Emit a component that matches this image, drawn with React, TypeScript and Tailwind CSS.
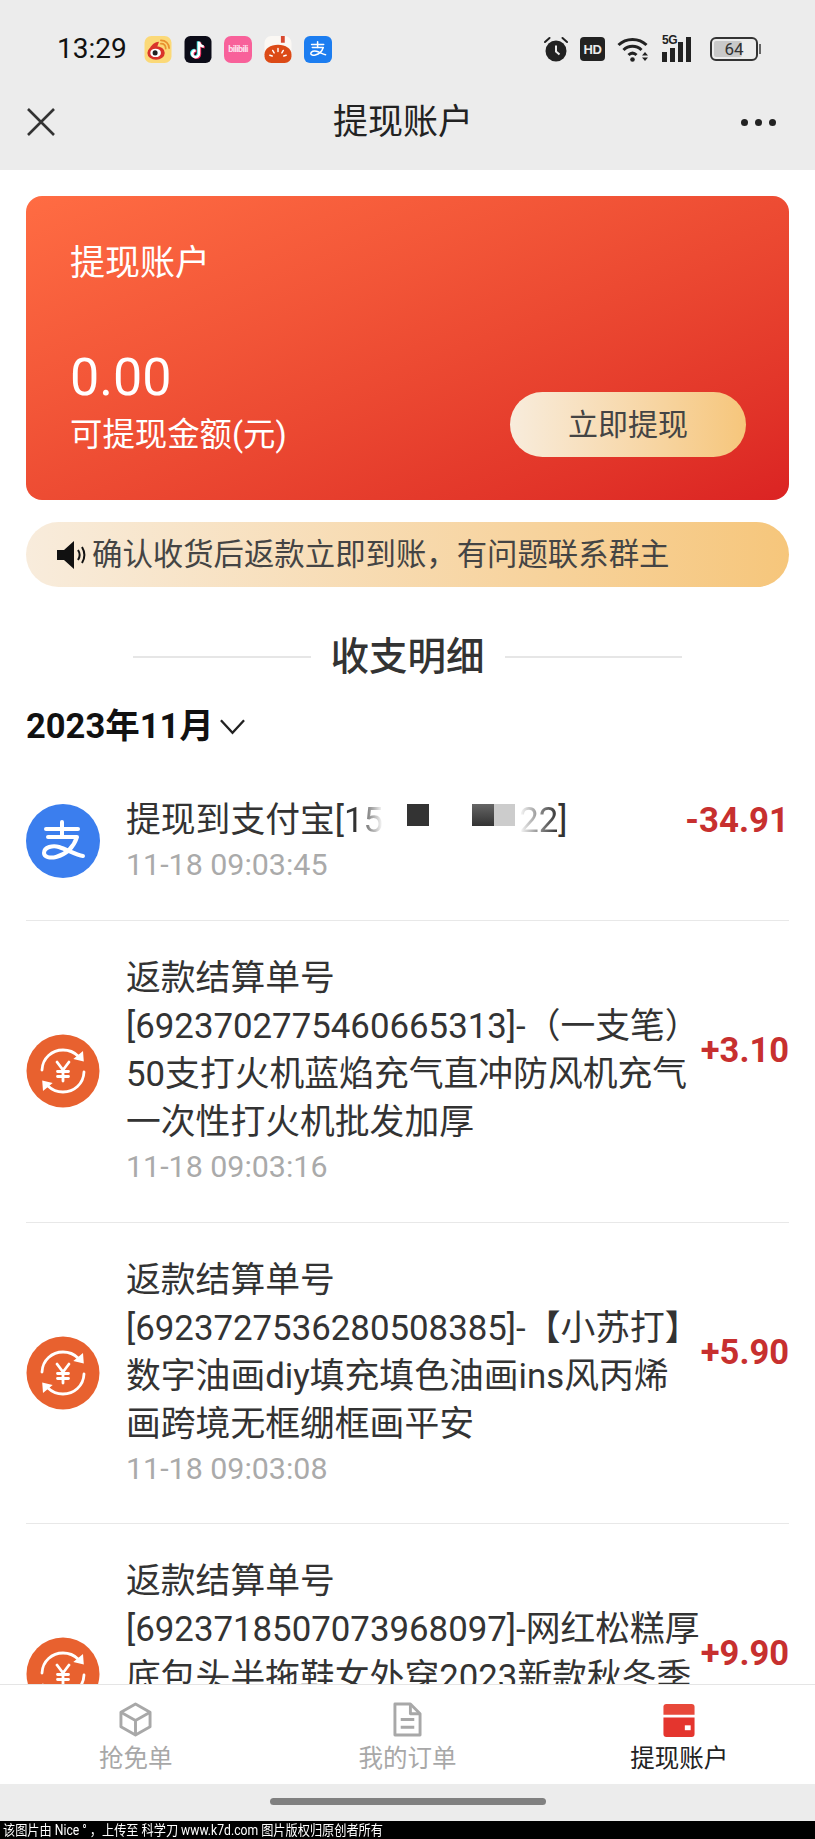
const rows = [
  {
    lines: ['返款结算单号', '[6923702775460665313]-（一支笔）', '50支打火机蓝焰充气直冲防风机充气', '一次性打火机批发加厚'],
    time: '11-18 09:03:16',
    amount: '+3.10',
  },
  {
    lines: ['返款结算单号', '[6923727536280508385]-【小苏打】', '数字油画diy填充填色油画ins风丙烯', '画跨境无框绷框画平安'],
    time: '11-18 09:03:08',
    amount: '+5.90',
  },
  {
    lines: ['返款结算单号', '[6923718507073968097]-网红松糕厚', '底包头半拖鞋女外穿2023新款秋冬季', '\u00a0'],
    time: '\u00a0',
    amount: '+9.90',
  },
];

function AlipayMark({ className }: { className?: string }) {
  return (
    <svg viewBox="0 0 74 74" className={className} fill="none" stroke="currentColor" strokeWidth="4" strokeLinecap="round" strokeLinejoin="round">
      <path d="M20 25h32" />
      <path d="M36 18v15" />
      <path d="M22 33h29c-3 9-10 17-21 20-6 1.500-12 0-12-4 0-6 9-8 15-6 8 2.500 17 8 24 9" />
    </svg>
  );
}

function WeiboIcon() {
  return (
    <svg viewBox="0 0 28 28" className="h-[27px] w-[28px]">
      <rect width="28" height="28" rx="7" fill="#fbd978" />
      <ellipse cx="12" cy="17.500" rx="9" ry="7" fill="#d9332a" />
      <path d="M5 14c2-5 6-8 10-8l-2 6z" fill="#d9332a" />
      <ellipse cx="11.500" cy="17.500" rx="5.500" ry="4.400" fill="#fff" />
      <circle cx="11" cy="17.500" r="2.600" fill="#222" />
      <path d="M17 8c3 0 5 2 5 5M17 4.500c5 0 8.500 3.500 8.500 8" fill="none" stroke="#e8912f" strokeWidth="1.800" strokeLinecap="round" />
    </svg>
  );
}

function TiktokIcon() {
  const note = 'M15 6v12.500a3.500 3.500 0 1 1-3.500-3.500M15 6c.5 3 2.500 4.800 5 5';
  return (
    <svg viewBox="0 0 28 28" className="h-[27px] w-[28px]" fill="none" strokeWidth="2.600">
      <rect width="28" height="28" rx="6" fill="#0c0c18" />
      <path d={note} stroke="#3de0e0" transform="translate(-1 -.6)" />
      <path d={note} stroke="#f0285a" transform="translate(1 .6)" />
      <path d={note} stroke="#fff" />
    </svg>
  );
}

function BiliIcon() {
  return (
    <div className="flex h-[27px] w-[28px] items-center justify-center rounded-[7px] bg-[#f8619a] text-[9px] leading-none font-bold tracking-[-0.6px] text-[#fde2ec]">
      bilibili
    </div>
  );
}

function TomatoIcon() {
  return (
    <svg viewBox="0 0 28 28" className="h-[27px] w-[28px]">
      <rect width="28" height="28" rx="7" fill="#fbf8f4" />
      <rect x="17" y="0" width="4" height="7" fill="#d8482f" />
      <path d="M0 19C0 13 6 9 14 9s14 4 14 10v2a7 7 0 0 1-7 7H7a7 7 0 0 1-7-7z" fill="#dc4a16" />
      <path d="M14 13v3M8.500 15l1.500 2.500M19.500 15l-1.500 2.500M5.500 20l2.500.8M22.500 20l-2.500.8" stroke="#fff" strokeWidth="1.500" strokeLinecap="round" />
    </svg>
  );
}

function RefundIcon() {
  return (
    <svg viewBox="0 0 74 74" className="h-[74px] w-[74px] shrink-0">
      <circle cx="37" cy="37" r="36.500" fill="#e8612f" />
      <g fill="none" stroke="#fff" strokeWidth="2.800" strokeLinecap="round" strokeLinejoin="round">
        <path d="M16 36C16.500 24 26 16 37 16c6 0 11 2 15 6" />
        <path d="M58 38C57.500 50 48 58 37 58c-6 0-11-2-15-6" />
        <path d="M31 28l6 8 6-8M37 36v11M31.500 37.500h11M31.500 42.500h11" />
      </g>
      <path d="M57 17l.8 10.500-10.500-2.500zM17 57l-.8-10.500 10.500 2.500z" fill="#fff" />
    </svg>
  );
}

function AlarmIcon() {
  return (
    <svg viewBox="0 0 24 26" className="h-[26px] w-[24px]" fill="#222">
      <circle cx="12" cy="15" r="10.500" />
      <path d="M12 9.500V15.500l3.500 3" fill="none" stroke="#ececec" strokeWidth="2" />
      <path d="M1 6l4.500-4M23 6l-4.500-4" stroke="#222" strokeWidth="2" strokeLinecap="round" />
    </svg>
  );
}

function WifiIcon() {
  return (
    <svg viewBox="0 0 33 26" className="h-[26px] w-[33px]" fill="none" stroke="#222" strokeWidth="3">
      <path d="M1.500 9C9 1.500 22 1.500 29.500 9" />
      <path d="M6.500 14c5-5 13-5 18 0" />
      <path d="M11.500 19c2.500-2.500 5.500-2.500 8 0" />
      <circle cx="15.500" cy="23.500" r="2.300" fill="#222" stroke="none" />
      <path d="M25 19.500l3-3.500 3 3.500zM25 21.500l3 3.500 3-3.500z" fill="#222" stroke="none" />
    </svg>
  );
}

function TabCube() {
  return (
    <svg viewBox="0 0 34 36" className="h-[35px] w-[33px]" fill="none" stroke="#a8a8a8" strokeWidth="3" strokeLinejoin="round">
      <path d="M17 2l15 8.500v15L17 34 2 25.500v-15z" />
      <path d="M2 10.500l15 8.500 15-8.500M17 19v15" />
    </svg>
  );
}

function TabDoc() {
  return (
    <svg viewBox="0 0 30 36" className="h-[35px] w-[29px]" fill="none" stroke="#a8a8a8" strokeWidth="3" strokeLinejoin="round">
      <path d="M2 2h16l10 10v22H2z" />
      <path d="M18 2v10h10" />
      <path d="M8 18h14M8 26h14" />
    </svg>
  );
}

function TabWallet() {
  return (
    <svg viewBox="0 0 32 36" className="h-[35px] w-[32px]">
      <path d="M3 2h26a3 3 0 0 1 3 3v8H0V5a3 3 0 0 1 3-3z" fill="#e8483a" />
      <path d="M0 16h32v17a3 3 0 0 1-3 3H3a3 3 0 0 1-3-3z" fill="#e4352e" />
      <rect x="22" y="24" width="6" height="5" fill="#fff" />
    </svg>
  );
}

function Tab({ icon, label, active }: { icon: React.ReactNode; label: string; active?: boolean }) {
  return (
    <div className="flex flex-1 flex-col items-center">
      <div className="flex h-[36px] items-center">{icon}</div>
      <span className={`mt-[4px] text-[24.500px] leading-[36px] ${active ? 'text-[#222]' : 'text-[#a8a8a8]'}`}>{label}</span>
    </div>
  );
}

export default function App() {
  return (
    <div className="flex h-[1839px] w-[815px] flex-col overflow-hidden bg-white font-['Roboto','Noto_Sans_CJK_SC',sans-serif] text-[#333]">
      <div className="flex h-[74px] shrink-0 items-center bg-[#ececec] pt-[24px] pr-[54px] pl-[57px]">
        <span className="w-[87px] text-[28px] leading-none text-[#111]">13:29</span>
        <div className="flex items-center gap-[12px]">
          <WeiboIcon />
          <TiktokIcon />
          <BiliIcon />
          <TomatoIcon />
          <div className="flex h-[27px] w-[28px] items-center justify-center rounded-[6px] bg-[#1c7df0] text-white">
            <AlipayMark className="h-[28px] w-[28px]" />
          </div>
        </div>
        <div className="ml-auto flex items-center gap-[12px]">
          <AlarmIcon />
          <div className="flex h-[24px] w-[25px] items-center justify-center rounded-[4px] bg-[#222] font-['Liberation_Sans',sans-serif] text-[13px] leading-none font-bold tracking-[-0.5px] text-[#ececec]">
            HD
          </div>
          <WifiIcon />
          <div className="relative h-[26px] w-[36px]">
            <span className="absolute top-[-2px] left-0 font-['Liberation_Sans',sans-serif] text-[12px] leading-none font-bold tracking-[-0.5px] text-[#222]">5G</span>
            <div className="flex h-full items-end gap-[3px]">
              <div className="h-[10px] w-[5px] bg-[#222]" />
              <div className="h-[14px] w-[5px] bg-[#222]" />
              <div className="h-[20px] w-[5px] bg-[#222]" />
              <div className="h-[25px] w-[5px] bg-[#222]" />
            </div>
          </div>
          <div className="flex items-center">
            <div className="relative flex h-[24px] w-[48px] items-center justify-center overflow-hidden rounded-[6px] border-2 border-[#333]">
              <div className="absolute inset-y-[2px] left-[2px] w-[28px] rounded-[2px] bg-[#c9c9c9]" />
              <span className="relative text-[17px] leading-none text-[#333]">64</span>
            </div>
            <div className="ml-[1px] h-[10px] w-[2px] bg-[#666]" />
          </div>
        </div>
      </div>

      <div className="flex h-[96px] shrink-0 items-center justify-between bg-[#ececec] pr-[39px] pl-[27px]">
        <svg viewBox="0 0 28 28" className="h-[28px] w-[28px]" fill="none" stroke="#333" strokeWidth="2.600">
          <path d="M1 1l26 26M27 1L1 27" />
        </svg>
        <span className="ml-[10px] text-[35px] leading-none text-[#222]">提现账户</span>
        <div className="flex gap-[7px]">
          <div className="h-[7px] w-[7px] rounded-full bg-[#222]" />
          <div className="h-[7px] w-[7px] rounded-full bg-[#222]" />
          <div className="h-[7px] w-[7px] rounded-full bg-[#222]" />
        </div>
      </div>

      <main className="min-h-0 flex-1 overflow-hidden px-[26px] pt-[26px]">
        <section className="h-[304px] rounded-[16px] bg-gradient-to-br from-[#ff6c43] to-[#db2323] px-[44px] pt-[46px] text-white">
          <div className="text-[35px] leading-[44px]">提现账户</div>
          <div className="mt-[62px] flex items-end justify-between">
            <div>
              <div className="text-[52px] leading-[60px]">0.00</div>
              <div className="mt-[5px] text-[32.4px] leading-[44px]">可提现金额(元)</div>
            </div>
            <button
              type="button"
              className="-mr-[1px] flex h-[65px] w-[236px] items-center justify-center rounded-full bg-gradient-to-r from-[#f8ecdc] to-[#f6c67b] text-[30px] text-[#444]"
            >
              立即提现
            </button>
          </div>
        </section>

        <div className="mt-[22px] flex h-[65px] items-center rounded-full bg-gradient-to-r from-[#f8ecdc] to-[#f6c67b] pl-[30px] text-[30.4px] text-[#444]">
          <svg viewBox="0 0 32 30" className="mr-[4px] h-[30px] w-[32px] shrink-0">
            <path d="M1 10h7l10-9v28l-10-9H1z" fill="#111" />
            <path d="M22 10c2 3 2 7 0 10M26 7c3 5 3 11 0 16" fill="none" stroke="#111" strokeWidth="2" />
          </svg>
          确认收货后返款立即到账，有问题联系群主
        </div>

        <div className="mt-[45px] flex h-[50px] items-center justify-center gap-[20px] px-[107px]">
          <div className="h-[2px] flex-1 bg-[#e6e6e6]" />
          <span className="text-[38.500px] leading-[50px] font-medium text-[#333]">收支明细</span>
          <div className="h-[2px] flex-1 bg-[#e6e6e6]" />
        </div>

        <div className="mt-[20px] flex h-[50px] items-center text-[34.500px] font-bold text-[#111]">
          2023年11月
          <svg viewBox="0 0 28 18" className="ml-[5px] h-[18px] w-[27px]" fill="none" stroke="#222" strokeWidth="2.400">
            <path d="M2 2l12 13L26 2" />
          </svg>
        </div>

        <div className="mt-[10px] flex h-[159px] items-center border-b-[1.500px] border-[#e8e8e8] pt-[34px] pb-[34px]">
          <div className="flex h-[74px] w-[74px] shrink-0 items-center justify-center rounded-full bg-[#3b7eee] text-white">
            <AlipayMark className="h-[74px] w-[74px]" />
          </div>
          <div className="ml-[26px] min-w-0 flex-1">
            <div className="flex items-center justify-between">
              <div className="flex items-center text-[34.800px] leading-[48px]">
                提现到支付宝[
                <span className="bg-gradient-to-r from-[#333] from-30% to-white bg-clip-text text-transparent">15</span>
                <div className="flex h-[48px] w-[142px] items-start pt-[8px]">
                  <div className="ml-[24px] h-[22px] w-[22px] bg-[#333]" />
                  <div className="ml-[43px] h-[22px] w-[22px] bg-gradient-to-b from-[#666] to-[#333]" />
                  <div className="h-[22px] w-[21px] bg-[#ccc]" />
                </div>
                <span className="-ml-[6px] bg-gradient-to-r from-white to-[#333] bg-clip-text text-transparent">22</span>
                ]
              </div>
              <span className="text-[34.800px] leading-[48px] font-bold text-[#c7302f]">-34.91</span>
            </div>
            <div className="text-[30.4px] leading-[42px] text-[#aaa]">11-18 09:03:45</div>
          </div>
        </div>

        {rows.map((row) => (
          <div key={row.amount} className="flex h-[301.500px] items-center border-b-[1.500px] border-[#e8e8e8] pt-[34px] pb-[34px]">
            <RefundIcon />
            <div className="ml-[26px] min-w-0 flex-1">
              <div className="flex items-center justify-between">
                <div className="text-[34.800px] leading-[48px] whitespace-nowrap">
                  {row.lines.map((line) => (
                    <div key={line}>{line}</div>
                  ))}
                </div>
                <span className="text-[34.500px] leading-[48px] font-bold text-[#c7302f]">{row.amount}</span>
              </div>
              <div className="text-[30.4px] leading-[42px] text-[#aaa]">{row.time}</div>
            </div>
          </div>
        ))}
      </main>

      <nav className="flex h-[100px] shrink-0 border-t border-[#e5e5e5] bg-white pt-[16px]">
        <Tab icon={<TabCube />} label="抢免单" />
        <Tab icon={<TabDoc />} label="我的订单" />
        <Tab icon={<TabWallet />} label="提现账户" active />
      </nav>

      <div className="flex h-[37px] shrink-0 justify-center bg-[#ececec] pt-[14px]">
        <div className="h-[7px] w-[276px] rounded-full bg-[#808080]" />
      </div>

      <div className="h-[18px] shrink-0 overflow-hidden bg-black pl-[3px] text-[14px] leading-[18px] whitespace-nowrap text-white">
        <span className="inline-block origin-left scale-x-[0.87]">该图片由 Nice ° ，上传至 科学刀 www.k7d.com 图片版权归原创者所有</span>
      </div>
    </div>
  );
}
